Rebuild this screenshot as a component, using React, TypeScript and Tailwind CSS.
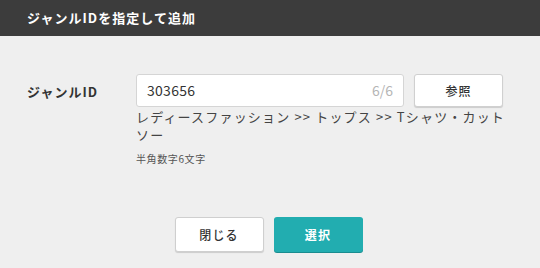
import React, { useState } from "react";

const font = { fontFamily: '"Noto Sans CJK JP", "Noto Sans", sans-serif' };

const App = () => {
  const [genreId, setGenreId] = useState("303656");

  return (
    <div className="h-[268px] w-[540px] bg-[#efefef] text-[#333]" style={font}>
      <header className="flex h-[36px] items-center bg-[#3c3c3c] px-[27px]">
        <h1 className="text-[13px] font-bold tracking-[0.08em] text-white">ジャンルIDを指定して追加</h1>
      </header>

      <div className="flex pt-[38px] pl-[27px]">
        <label className="w-[109px] pt-[8px] text-[13px] font-bold tracking-[0.08em]">ジャンルID</label>
        <div className="w-[380px]">
          <div className="flex gap-[10px]">
            <div className="flex h-[33px] w-[268px] items-center rounded-[3px] border border-[#d5d5d5] bg-white px-[10px]">
              <input
                value={genreId}
                onChange={(e) => setGenreId(e.target.value)}
                className="w-full bg-transparent text-[14px] tracking-[0.02em] text-[#333] outline-none"
              />
              <span className="text-[14px] text-[#b5b5b5]">{genreId.length}/6</span>
            </div>
            <button
              type="button"
              className="h-[33px] w-[89px] rounded-[3px] border border-[#d0d0d0] bg-white text-[12px] font-medium tracking-[0.08em] shadow-[0_1px_1px_rgba(0,0,0,0.15)]"
            >
              参照
            </button>
          </div>
          <p className="mt-[1px] text-[13px] leading-[18px] tracking-[0.09em] text-[#444]">
            レディースファッション &gt;&gt; トップス &gt;&gt; Tシャツ・カットソー
          </p>
          <p className="mt-[7px] text-[10px] tracking-[0.06em] text-[#555]">半角数字6文字</p>
        </div>
      </div>

      <div className="mt-[51px] flex justify-center gap-[10px] pr-[3px]">
        <button
          type="button"
          className="h-[35px] w-[89px] rounded-[3px] border border-[#cfcfcf] bg-white text-[12px] font-medium tracking-[0.1em] shadow-[0_1px_1px_rgba(0,0,0,0.15)]"
        >
          閉じる
        </button>
        <button
          type="button"
          className="h-[35px] w-[89px] rounded-[3px] bg-[#22adb0] text-[12px] font-bold tracking-[0.1em] text-white shadow-[0_1px_0_#1a8c8f]"
        >
          選択
        </button>
      </div>
    </div>
  );
};

export default App;
